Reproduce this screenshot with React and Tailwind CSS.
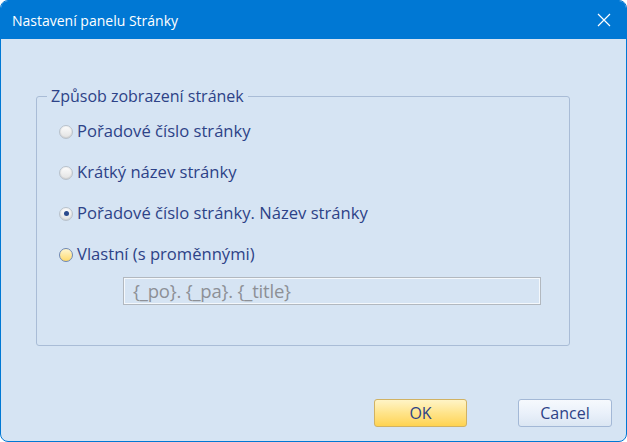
import React, { useState } from "react";

const options = [
  "Pořadové číslo stránky",
  "Krátký název stránky",
  "Pořadové číslo stránky. Název stránky",
  "Vlastní (s proměnnými)",
];

const Radio = ({ checked, hot }) => {
  if (hot) {
    return (
      <span className="w-[14px] h-[14px] rounded-full border border-[#6f86b0] bg-gradient-to-b from-[#fff6cf] to-[#ffd968] shrink-0" />
    );
  }
  return (
    <span className="w-[14px] h-[14px] rounded-full border border-[#b9c2cc] bg-gradient-to-b from-[#f4f4f4] to-[#d2d2d2] flex items-center justify-center shrink-0">
      <span className="w-[10px] h-[10px] rounded-full bg-gradient-to-b from-[#fafafa] to-[#e4e4e4] flex items-center justify-center">
        {checked && <span className="w-[5px] h-[5px] rounded-full bg-[#2c4a8c]" />}
      </span>
    </span>
  );
};

const App = () => {
  const [selected] = useState(2);

  return (
    <div
      className="w-[627px] h-[442px] rounded-lg border border-[#0078d4] overflow-hidden flex flex-col bg-[#d6e4f3]"
      style={{ fontFamily: '"Open Sans", "Noto Sans", sans-serif' }}
    >
      <div className="h-[38px] bg-[#0078d4] flex items-center justify-between pl-[11px] pr-[15px] text-white">
        <span className="text-[14px]">Nastavení panelu Stránky</span>
        <svg width="14" height="14" viewBox="0 0 14 14">
          <path d="M1 1 L13 13 M13 1 L1 13" stroke="#fff" strokeWidth="1.2" fill="none" />
        </svg>
      </div>

      <div className="flex-1 flex flex-col">
        <fieldset className="mt-[47px] ml-[35px] w-[534px] h-[260px] border border-[#a9bcd6] rounded-[3px] px-[22px]">
          <legend className="ml-[-12px] px-[4px] text-[16px] text-[#2d4287] leading-[20px]">
            Způsob zobrazení stránek
          </legend>
          <div className="flex flex-col mt-[5px]">
            {options.map((label, i) => (
              <div key={i} className="h-[41px] flex items-center gap-[4px]">
                <Radio checked={selected === i} hot={i === 3} />
                <span className="text-[16.6px] text-[#2d4287]">{label}</span>
              </div>
            ))}
          </div>
          <div className="ml-[64px] mt-[2px] w-[418px] h-[28px] border border-[#b2b8bf] shadow-[inset_0_0_0_1px_#f4f8fc] flex items-center px-[9px]">
            <span className="text-[18.5px] leading-none text-[#8d9096] tracking-[-0.2px]">{"{_po}. {_pa}. {_title}"}</span>
          </div>
        </fieldset>

        <div className="flex justify-end gap-[51px] mt-[53px] pr-[14px]">
          <button className="w-[93px] h-[28px] rounded-[3px] border border-[#d1b263] bg-gradient-to-b from-[#fff4c6] via-[#ffe48a] to-[#ffd34f] text-[16px] text-[#2d4287]">
            OK
          </button>
          <button className="w-[94px] h-[28px] rounded-[3px] border border-[#a3b8d6] bg-gradient-to-b from-[#f6f9fd] via-[#eaf1fa] to-[#dbe6f3] text-[16px] text-[#2d4287]">
            Cancel
          </button>
        </div>
      </div>
    </div>
  );
};

export default App;
